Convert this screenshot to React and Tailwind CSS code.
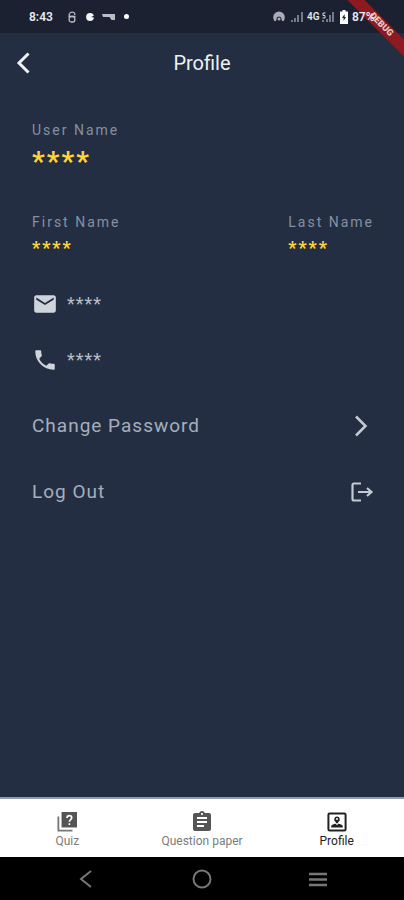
import React from "react";
import { MdEmail, MdPhone, MdAssignment } from "react-icons/md";

function StatusBar() {
  return (
    <div className="flex h-[33px] items-center justify-between bg-[#1b2131] pl-[29px] text-xs font-semibold text-[#e6e8ec]">
      <div className="flex items-center">
        <span className="w-[39px]">8:43</span>
        <svg className="h-3 w-2" viewBox="0 0 8 12" fill="none" stroke="#b9bdc6" strokeWidth="1.3">
          <path d="M7 2.500C6 .8 2.500 .6 1.500 2.500M.5 5.500H7.500" />
          <rect x="1.200" y="5.500" width="5.600" height="5.500" rx="2" />
          <path d="M1.300 2.500V5.500M6.700 2.500V4" />
        </svg>
        <svg className="ml-[10px] h-2 w-2" viewBox="0 0 8 8">
          <circle cx="4" cy="4" r="3.900" fill="#f4f5f7" />
          <path d="M5 4 8 2.800v1.700Z" fill="#1b2131" />
        </svg>
        <svg className="ml-2 h-2 w-[13px]" viewBox="0 0 13 8" fill="#b9bdc6">
          <path d="M0 1h13v6H9.500L7.500 4H1Z" />
        </svg>
        <span className="ml-[9px] h-[5px] w-[5px] rounded-full bg-white" />
      </div>
      <div className="flex items-center pr-6">
        <svg className="h-3 w-3" viewBox="0 0 12 12" fill="#a9adb7">
          <path d="M2 10.500A5.800 5.800 0 1 1 10 10.500L8.500 9A3 3 0 0 0 6 5.500 3 3 0 0 0 3.500 9Z" />
          <circle cx="6" cy="8" r="1.500" />
        </svg>
        <svg className="ml-[6px] h-3 w-3" viewBox="0 0 12 12" fill="#747a87">
          <path d="M0 9h2v2H0ZM3 7h2v4H3ZM6 4h2v7H6ZM10 1h2v10h-2Z" />
        </svg>
        <span className="ml-1 w-[13px] text-[10px]">4G</span>
        <svg className="ml-[2px] h-3 w-3" viewBox="0 0 12 12">
          <path d="M3.500 2H1v2.500h2V7H.5" fill="none" stroke="#d5d8de" />
          <path d="M0 9h2v2H0ZM4 8h2v3H4ZM7 4h2v7H7ZM10 1h2v10h-2Z" fill="#747a87" />
        </svg>
        <svg className="ml-[6px] h-[14px] w-2" viewBox="0 0 8 14">
          <path d="M2.500 0h3v1.500H8V14H0V1.500h2.500Z" fill="#fff" />
          <path d="M4.600 4 2 8h1.600v3L6 7H4.600Z" fill="#1b2131" />
        </svg>
        <span className="relative z-20 ml-1 w-[28px]">87%</span>
      </div>
    </div>
  );
}

function DebugBanner() {
  return (
    <div className="pointer-events-none absolute top-0 right-0 z-10 h-16 w-16 overflow-hidden">
      <div className="absolute top-[19px] right-[-31px] flex h-3 w-[108px] rotate-45 items-center justify-center bg-[#8d1a20] text-[9px] font-black text-[#e3c9cc]">
        DEBUG
      </div>
    </div>
  );
}

function Field({ label, value, large }) {
  return (
    <div>
      <dt className="text-sm leading-5 tracking-[2px] text-[#8590a1]">{label}</dt>
      <dd className={large ? "mt-1 text-[28px] leading-9 font-bold tracking-[2px] text-[#ffd43b]" : "mt-1 text-lg leading-6 font-bold tracking-[2px] text-[#ffd43b]"}>
        {value}
      </dd>
    </div>
  );
}

function ContactRow({ icon: Icon, label, value }) {
  return (
    <div className="flex h-6 items-center gap-[9px]">
      <Icon className="size-[26px] text-[#cfd4da]" aria-label={label} />
      <span className="text-lg leading-6 tracking-[1px] text-[#b4bcc8]">{value}</span>
    </div>
  );
}

function ActionRow({ label, children }) {
  return (
    <button type="button" className="flex h-[66px] w-full items-center justify-between text-[19px] tracking-[1px] text-[#a5afbd]">
      {label}
      {children}
    </button>
  );
}

function QuizIcon({ className }) {
  return (
    <svg className={className} viewBox="0 0 22 22">
      <path d="M1.500 5v15.500H17" fill="none" stroke="#777" strokeWidth="2" />
      <path d="M5 0h17v17H5Z" fill="currentColor" />
      <path d="M11 6.500c0-3.500 5.200-3.300 5.200-.2 0 2-2.600 2.200-2.600 4.500M13.600 12.300v1.900" fill="none" stroke="#fff" strokeWidth="1.800" />
    </svg>
  );
}

function PortraitIcon({ className }) {
  return (
    <svg className={className} viewBox="0 0 24 24" fill="currentColor">
      <rect x="1.700" y="1.700" width="20.600" height="20.600" rx="1.500" fill="none" stroke="currentColor" strokeWidth="2.400" />
      <path d="M12 5.300a3.500 3.500 0 0 1 1.500 6.600L13 13.500h-2l-.5-1.600A3.500 3.500 0 0 1 12 5.300Z" />
      <path d="M5 18.500v-1.300c0-2 3.500-3 5.500-3.200l1.500 2 1.500-2c2 .2 5.500 1.200 5.500 3.200v1.300Z" />
      <circle cx="12" cy="8.300" r="1.200" fill="#fff" />
    </svg>
  );
}

function Tab({ icon: Icon, label, active }) {
  return (
    <a href="#" aria-current={active ? "page" : undefined} className={active ? "flex flex-1 flex-col items-center pt-3 text-[#222]" : "flex flex-1 flex-col items-center pt-3 text-[#555]"}>
      <span className="flex h-[22px] items-center">
        <Icon className={label === "Question paper" ? "size-6" : "size-5"} />
      </span>
      <span className={active ? "text-xs leading-4" : "text-xs leading-4 text-[#7c7c7c]"}>{label}</span>
    </a>
  );
}

export default function App() {
  return (
    <div className="relative flex min-h-screen flex-col bg-[#242e42] font-['Roboto',sans-serif]">
      <StatusBar />
      <header className="grid h-[59px] grid-cols-[48px_1fr_48px] items-center text-[#eef0f3]">
        <button type="button" aria-label="Back" className="flex h-12 items-center pl-4">
          <svg className="h-[22px] w-[14px]" viewBox="0 0 14 22" fill="none" stroke="currentColor" strokeWidth="3">
            <path d="M12.500 1.500 3 11l9.500 9.500" />
          </svg>
        </button>
        <h1 className="text-center text-xl">Profile</h1>
      </header>
      <main className="flex-1 pt-7 pr-[30px] pl-8">
        <dl>
          <Field label="User Name" value="****" large />
          <div className="mt-8 flex justify-between">
            <Field label="First Name" value="****" />
            <Field label="Last Name" value="****" />
          </div>
        </dl>
        <div className="mt-8 flex flex-col gap-8">
          <ContactRow icon={MdEmail} label="Email" value="****" />
          <ContactRow icon={MdPhone} label="Phone" value="****" />
        </div>
        <div className="mt-[21px]">
          <ActionRow label="Change Password">
            <svg className="h-[22px] w-6" viewBox="0 0 24 22" fill="none" stroke="#c3cad4" strokeWidth="2.500">
              <path d="m6 1.500 9.500 9.500L6 20.500" />
            </svg>
          </ActionRow>
          <ActionRow label="Log Out">
            <svg className="size-6" viewBox="0 0 24 24" fill="none" stroke="#c3cad4" strokeWidth="2.200">
              <path d="M11 3.500H4a1.500 1.500 0 0 0-1.500 1.500v14A1.500 1.500 0 0 0 4 20.500h7M8 12h13M17 8l4.500 4-4.500 4" />
            </svg>
          </ActionRow>
        </div>
      </main>
      <nav className="flex h-[60px] border-t-2 border-[#8f9aad] bg-white">
        <Tab icon={QuizIcon} label="Quiz" />
        <Tab icon={MdAssignment} label="Question paper" />
        <Tab icon={PortraitIcon} label="Profile" active />
      </nav>
      <div className="flex h-[43px] items-center justify-around bg-black px-7 text-[#777]">
        <button type="button" aria-label="System back">
          <svg className="h-[18px] w-5" viewBox="0 0 20 18" fill="none" stroke="currentColor" strokeWidth="2">
            <path d="M15 1 5 9l10 8" />
          </svg>
        </button>
        <button type="button" aria-label="Home">
          <svg className="size-5" viewBox="0 0 20 20" fill="none" stroke="currentColor" strokeWidth="2">
            <circle cx="10" cy="10" r="8.500" />
          </svg>
        </button>
        <button type="button" aria-label="Recent apps">
          <svg className="size-5" viewBox="0 0 20 20" fill="none" stroke="currentColor" strokeWidth="2.500">
            <path d="M1 5h18M1 10.500h18M1 16h18" />
          </svg>
        </button>
      </div>
      <DebugBanner />
    </div>
  );
}
